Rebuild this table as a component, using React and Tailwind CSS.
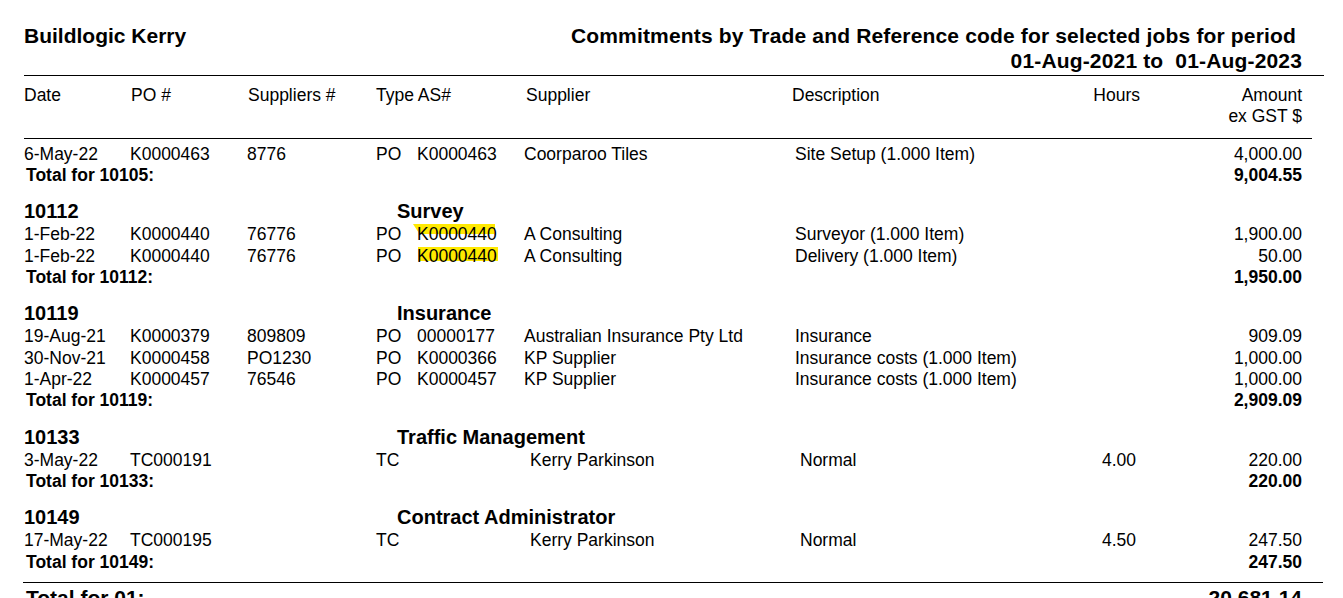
import React from 'react';

const cols = 'grid grid-cols-[106px_117px_129px_41px_107px_271px_1fr_80px_162px]';

const groups = [
    {
        code: '10105',
        rows: [
            { date: '6-May-22', po: 'K0000463', supp: '8776', type: 'PO', as: 'K0000463', supplier: 'Coorparoo Tiles', desc: 'Site Setup (1.000 Item)', hours: '', amount: '4,000.00' },
        ],
        total: '9,004.55',
    },
    {
        code: '10112',
        trade: 'Survey',
        rows: [
            { date: '1-Feb-22', po: 'K0000440', supp: '76776', type: 'PO', as: 'K0000440', hl: 'top', supplier: 'A Consulting', desc: 'Surveyor (1.000 Item)', hours: '', amount: '1,900.00' },
            { date: '1-Feb-22', po: 'K0000440', supp: '76776', type: 'PO', as: 'K0000440', hl: 'full', supplier: 'A Consulting', desc: 'Delivery (1.000 Item)', hours: '', amount: '50.00' },
        ],
        total: '1,950.00',
    },
    {
        code: '10119',
        trade: 'Insurance',
        rows: [
            { date: '19-Aug-21', po: 'K0000379', supp: '809809', type: 'PO', as: '00000177', supplier: 'Australian Insurance Pty Ltd', desc: 'Insurance', hours: '', amount: '909.09' },
            { date: '30-Nov-21', po: 'K0000458', supp: 'PO1230', type: 'PO', as: 'K0000366', supplier: 'KP Supplier', desc: 'Insurance costs (1.000 Item)', hours: '', amount: '1,000.00' },
            { date: '1-Apr-22', po: 'K0000457', supp: '76546', type: 'PO', as: 'K0000457', supplier: 'KP Supplier', desc: 'Insurance costs (1.000 Item)', hours: '', amount: '1,000.00' },
        ],
        total: '2,909.09',
    },
    {
        code: '10133',
        trade: 'Traffic Management',
        rows: [
            { date: '3-May-22', po: 'TC000191', supp: '', type: 'TC', as: '', tc: true, supplier: 'Kerry Parkinson', desc: 'Normal', hours: '4.00', amount: '220.00' },
        ],
        total: '220.00',
    },
    {
        code: '10149',
        trade: 'Contract Administrator',
        rows: [
            { date: '17-May-22', po: 'TC000195', supp: '', type: 'TC', as: '', tc: true, supplier: 'Kerry Parkinson', desc: 'Normal', hours: '4.50', amount: '247.50' },
        ],
        total: '247.50',
    },
];

// marker-pen highlight sitting behind the AS# text
const Highlight = ({ kind, children }) => (
    <span className="relative isolate inline-block">
        {kind === 'top' && (
            <span className="absolute left-[-4px] top-[0px] h-[10px] w-[82px] bg-[#ffe900] -z-10 [clip-path:polygon(0_0,100%_0,100%_100%,8%_100%)]"></span>
        )}
        {kind === 'full' && (
            <span className="absolute left-[1px] top-[1.5px] h-[14px] w-[80px] bg-[#ffe900] -z-10"></span>
        )}
        {children}
    </span>
);

const Row = ({ r }) => (
    <div className={`${cols} leading-[21.4px]`}>
        <span>{r.date}</span>
        <span>{r.po}</span>
        <span>{r.supp}</span>
        <span>{r.type}</span>
        <span>{r.hl ? <Highlight kind={r.hl}>{r.as}</Highlight> : r.as}</span>
        <span className={r.tc ? 'pl-[6px]' : ''}>{r.supplier}</span>
        <span className={r.tc ? 'pl-[5px]' : ''}>{r.desc}</span>
        <span className="text-right pr-[4px]">{r.hours}</span>
        <span className="text-right">{r.amount}</span>
    </div>
);

const App = () => {
    return (
        <div className="min-h-[598px] bg-white text-black font-['Liberation_Sans',Arial,sans-serif] pl-[24px] pt-[23px] overflow-hidden">
            {/* Report title */}
            <div className="flex justify-between w-[1278px] text-[21px] font-bold leading-[25px]">
                <div>Buildlogic Kerry</div>
                <div className="text-right tracking-[0.16px]">
                    <div className="pr-[6px]">Commitments by Trade and Reference code for selected jobs for period</div>
                    <div className="whitespace-pre">01-Aug-2021 to  01-Aug-2023</div>
                </div>
            </div>
            <div className="w-[1300px] h-px bg-black mt-[1.5px]"></div>

            {/* Column headings */}
            <div className={`${cols} w-[1278px] text-[17.5px] leading-[21px] pt-[9.5px]`}>
                <span>Date</span>
                <span className="pl-[1px]">PO #</span>
                <span className="pl-[1px]">Suppliers #</span>
                <span className="col-span-2">Type AS#</span>
                <span className="pl-[2px]">Supplier</span>
                <span className="-ml-[3px]">Description</span>
                <span className="text-right">Hours</span>
                <span className="text-right">Amount<br />ex GST $</span>
            </div>
            <div className="w-[1288px] h-px bg-black mt-[11px]"></div>

            {/* Trade groups */}
            <div className="w-[1278px] text-[17.5px] pt-[4.5px]">
                {groups.map((g, i) => (
                    <div key={g.code} className={i > 0 ? 'mt-[12.8px]' : ''}>
                        {g.trade && (
                            <div className="flex text-[20px] font-bold leading-[25px]">
                                <span className="w-[373px]">{g.code}</span>
                                <span>{g.trade}</span>
                            </div>
                        )}
                        {g.rows.map((r, j) => (
                            <Row key={j} r={r} />
                        ))}
                        <div className="flex justify-between font-bold leading-[21.4px]">
                            <span className="pl-[2px]">Total for {g.code}:</span>
                            <span>{g.total}</span>
                        </div>
                    </div>
                ))}
            </div>

            <div className="w-[1300px] h-px bg-black mt-[9.5px] -ml-px"></div>
            <div className="flex justify-between w-[1278px] text-[21px] font-bold leading-[25px] mt-[2px]">
                <span className="pl-[2px]">Total for 01:</span>
                <span>20,681.14</span>
            </div>
        </div>
    );
};

export default App;
